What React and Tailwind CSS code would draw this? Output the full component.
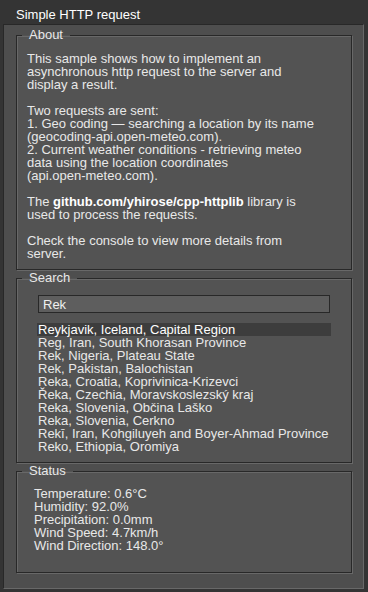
import { useState } from "react";

const places = [
    "Reykjavik, Iceland, Capital Region",
    "Reg, Iran, South Khorasan Province",
    "Rek, Nigeria, Plateau State",
    "Rek, Pakistan, Balochistan",
    "Reka, Croatia, Koprivinica-Krizevci",
    "Řeka, Czechia, Moravskoslezský kraj",
    "Reka, Slovenia, Občina Laško",
    "Reka, Slovenia, Cerkno",
    "Rekī, Iran, Kohgiluyeh and Boyer-Ahmad Province",
    "Reko, Ethiopia, Oromiya",
];

const status = [
    "Temperature: 0.6°C",
    "Humidity: 92.0%",
    "Precipitation: 0.0mm",
    "Wind Speed: 4.7km/h",
    "Wind Direction: 148.0°",
];

function Group({ title, children }) {
    return (
        <fieldset className="border border-[#282828] bg-[#535353] shadow-[inset_1px_1px_0_#686868,1px_1px_0_#686868]">
            <legend className="ml-[5px] px-[7px] leading-[14px] text-[#e8e8e8]">{title}</legend>
            {children}
        </fieldset>
    );
}

export default function App() {
    const [query, setQuery] = useState("Rek");
    const [selected, setSelected] = useState(0);

    return (
        <div className="w-[368px] h-[592px] bg-[#343434] flex flex-col text-[13px] font-['Liberation_Sans',Arial,sans-serif] text-[#e8e8e8]">
            <div className="h-[24px] shrink-0 pl-4 pt-[4px] leading-[22px] text-white">Simple HTTP request</div>

            <div className="flex-1 ml-[3px] w-[361px] mb-[3px] border border-t-[#282828] border-l-[#282828] border-r-[#686868] border-b-[#686868] bg-[#4e4e4e] pl-[12px] pr-[11px] pt-[3px] flex flex-col gap-px">
                <Group title="About">
                    <div className="pl-[10px] pr-2 pt-[10px] pb-[9px] leading-[13px]">
                        <p>This sample shows how to implement an<br />asynchronous http request to the server and<br />display a result.</p>
                        <p className="mt-[13px]">
                            Two requests are sent:<br />
                            1. Geo coding — searching a location by its name<br />
                            (geocoding-api.open-meteo.com).<br />
                            2. Current weather conditions - retrieving meteo<br />
                            data using the location coordinates<br />
                            (api.open-meteo.com).
                        </p>
                        <p className="mt-[13px]">
                            The <b className="text-white">github.com/yhirose/cpp-httplib</b> library is<br />
                            used to process the requests.
                        </p>
                        <p className="mt-[13px]">Check the console to view more details from<br />server.</p>
                    </div>
                </Group>

                <Group title="Search">
                    <div className="px-[20px] pt-[10px] pb-[9px]">
                        <input
                            className="mx-px block w-[292px] h-[18px] border border-[#282828] bg-[#5e5e5e] px-[4px] leading-[16px] text-[#f0f0f0] outline-none"
                            value={query}
                            onChange={(e) => setQuery(e.target.value)}
                        />
                        <ul className="mt-[10px] leading-[13px]">
                            {places.map((p, i) => (
                                <li
                                    key={p}
                                    className={i === selected ? "pl-px bg-[#3d3d3d] text-white" : "pl-px"}
                                    onClick={() => setSelected(i)}
                                >
                                    {p}
                                </li>
                            ))}
                        </ul>
                    </div>
                </Group>

                <Group title="Status">
                    <div className="pl-[17px] pt-[9px] pb-[20px] leading-[13px]">
                        {status.map((s) => (
                            <div key={s}>{s}</div>
                        ))}
                    </div>
                </Group>
            </div>
        </div>
    );
}
